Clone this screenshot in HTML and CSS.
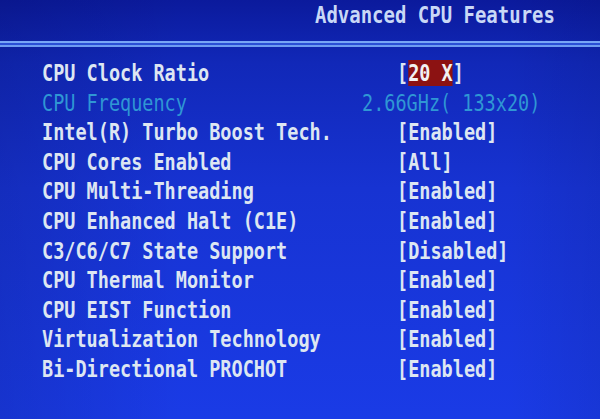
FILE: index.html
```html
<!DOCTYPE html>
<html>
<head>
<meta charset="utf-8">
<link rel="stylesheet" href="styles.css">
</head>
<body>
<div class="screen">
  <div class="title"><span class="t tt">Advanced CPU Features</span></div>
  <div class="rule"></div>
  <div class="list">
    <div class="row"><span class="t lbl">CPU Clock Ratio</span><span class="t val">[<span class="hl">20 X</span>]</span></div>
    <div class="row dim"><span class="t lbl">CPU Frequency</span><span class="t val wide">2.66GHz( 133x20)</span></div>
    <div class="row"><span class="t lbl">Intel(R) Turbo Boost Tech.</span><span class="t val">[Enabled]</span></div>
    <div class="row"><span class="t lbl">CPU Cores Enabled</span><span class="t val">[All]</span></div>
    <div class="row"><span class="t lbl">CPU Multi-Threading</span><span class="t val">[Enabled]</span></div>
    <div class="row"><span class="t lbl">CPU Enhanced Halt (C1E)</span><span class="t val">[Enabled]</span></div>
    <div class="row"><span class="t lbl">C3/C6/C7 State Support</span><span class="t val">[Disabled]</span></div>
    <div class="row"><span class="t lbl">CPU Thermal Monitor</span><span class="t val">[Enabled]</span></div>
    <div class="row"><span class="t lbl">CPU EIST Function</span><span class="t val">[Enabled]</span></div>
    <div class="row"><span class="t lbl">Virtualization Technology</span><span class="t val">[Enabled]</span></div>
    <div class="row"><span class="t lbl">Bi-Directional PROCHOT</span><span class="t val">[Enabled]</span></div>
  </div>
</div>
</body>
</html>
```
FILE: styles.css
```css
html, body {
  margin: 0;
  padding: 0;
}
body {
  width: 600px;
  height: 419px;
  overflow: hidden;
}
.screen {
  width: 600px;
  height: 419px;
  box-sizing: border-box;
  padding-top: 1px;
  background:
    linear-gradient(to right, rgba(0, 0, 40, 0.12), rgba(0, 0, 0, 0) 30%, rgba(0, 0, 0, 0) 85%, rgba(0, 0, 40, 0.08)),
    linear-gradient(to bottom, #0b1a9c 0%, #1128b8 15%, #1733d2 45%, #1a3be6 100%);
  font-family: "DejaVu Sans Mono", "Liberation Mono", monospace;
  font-weight: bold;
  font-size: 23px;
  color: #dde6f2;
}
.t {
  display: inline-block;
  transform: scaleX(0.805);
  transform-origin: left center;
  white-space: pre;
}
.tt {
  transform: scaleX(0.825);
}
.title {
  padding-left: 315px;
  line-height: 28px;
  height: 28px;
  color: #c9d8f6;
}
.rule {
  margin-top: 12px;
  height: 2px;
  border-top: 2px solid #78a6f6;
  border-bottom: 2px solid #6e9cf2;
  background: #2a4fd6;
}
.list {
  margin-top: 12px;
}
.row {
  display: grid;
  grid-template-columns: 42px 320px 35px 1fr;
  line-height: 29.6px;
  height: 29.6px;
}
.lbl {
  grid-column: 2;
}
.val {
  grid-column: 4;
}
.val.wide {
  grid-column: 3 / 5;
}
.dim {
  color: #2f97d4;
  font-weight: normal;
}
.hl {
  background: #8c1212;
  color: #f2f2f2;
}
```
